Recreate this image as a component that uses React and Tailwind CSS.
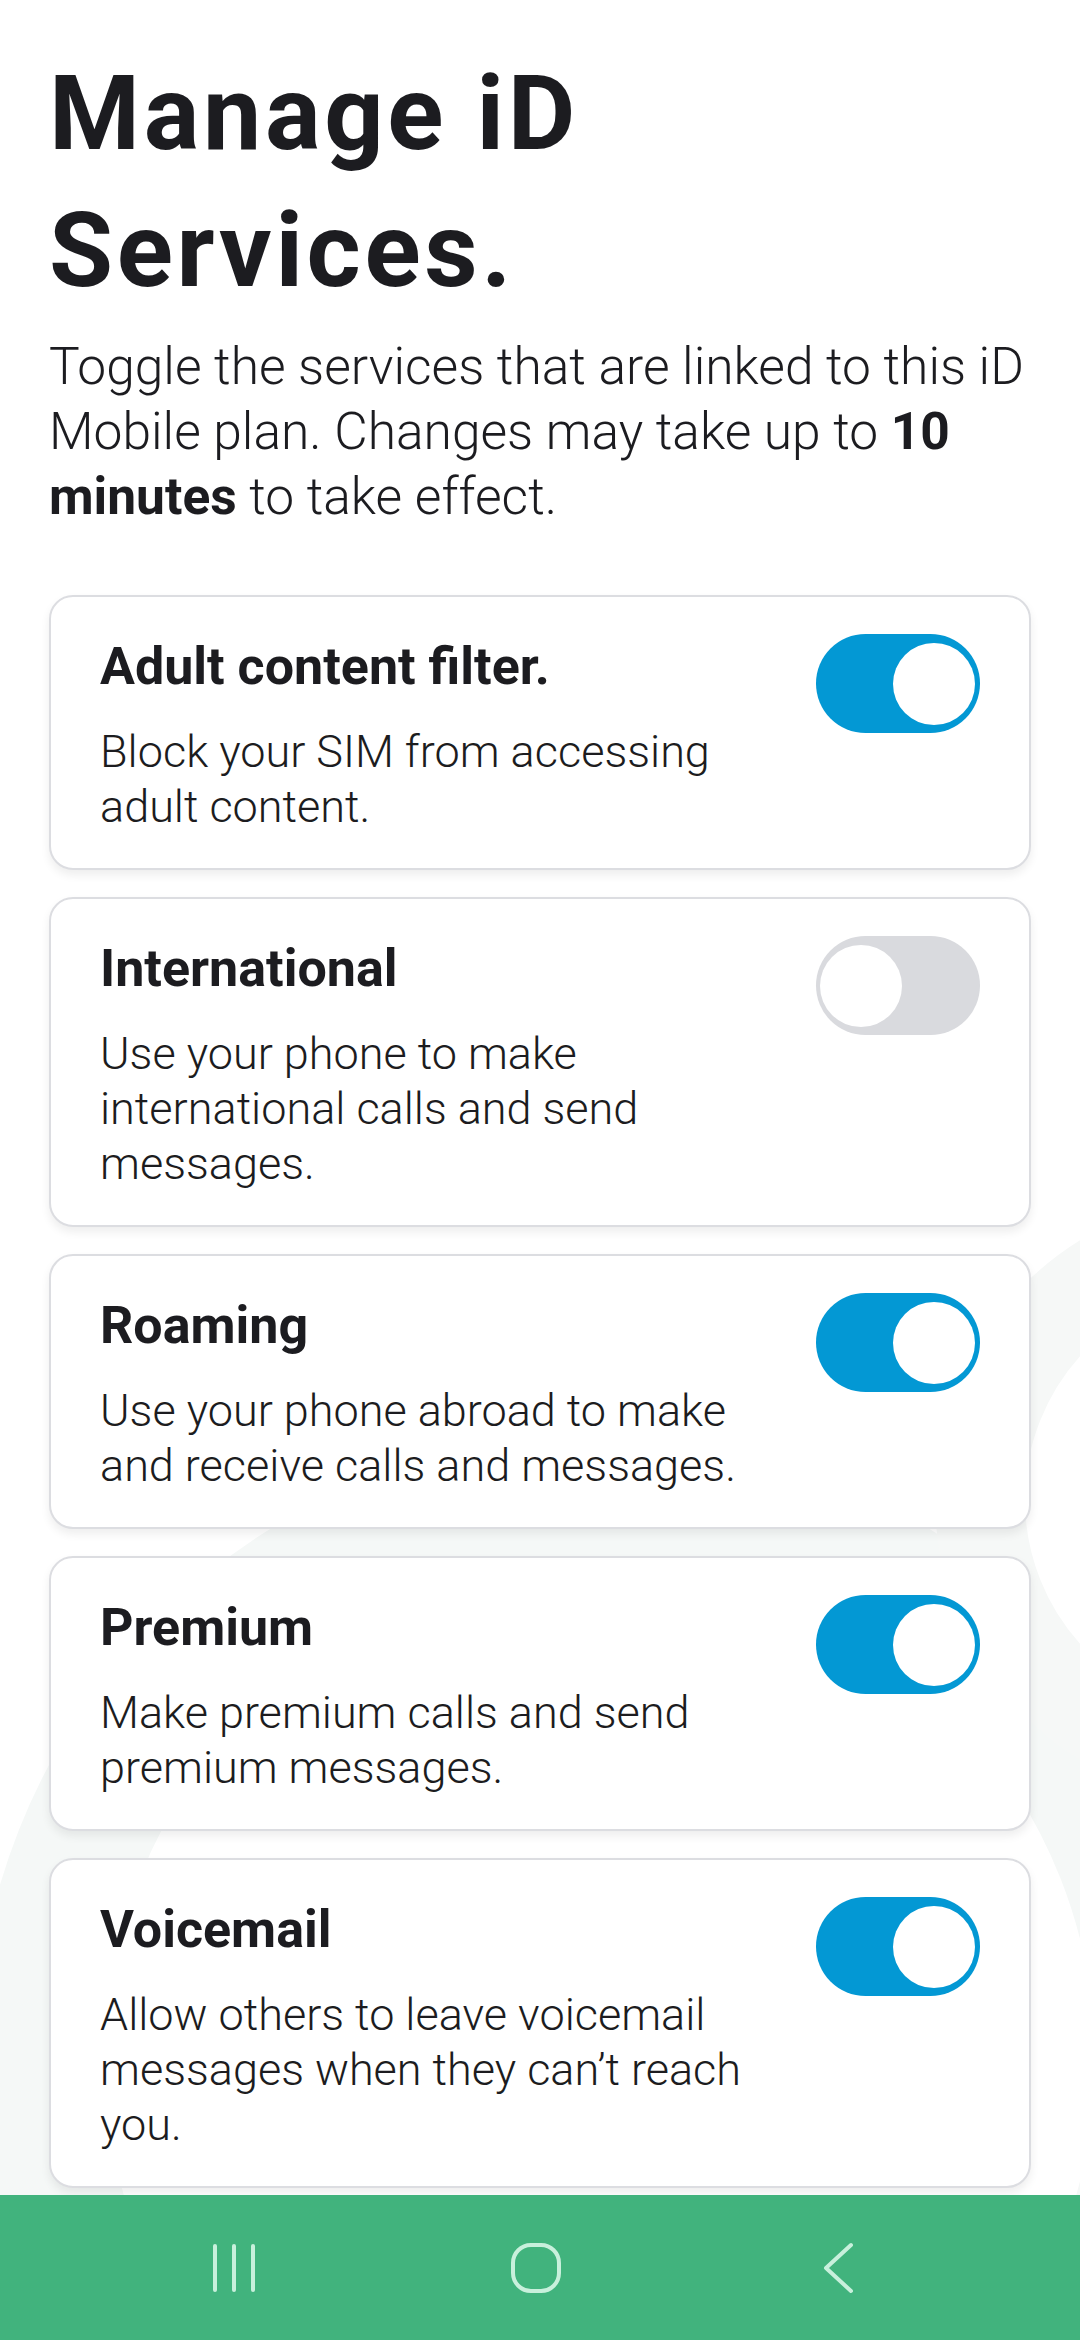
const services = [
  {
    title: "Adult content filter.",
    text: "Block your SIM from accessing adult content.",
    on: true,
  },
  {
    title: "International",
    text: "Use your phone to make international calls and send messages.",
    on: false,
  },
  {
    title: "Roaming",
    text: "Use your phone abroad to make and receive calls and messages.",
    on: true,
  },
  {
    title: "Premium",
    text: "Make premium calls and send premium messages.",
    on: true,
  },
  {
    title: "Voicemail",
    text: "Allow others to leave voicemail messages when they can\u2019t reach you.",
    on: true,
  },
];

function Toggle({ on }) {
  return (
    <div
      className={
        on
          ? "relative -mt-[3px] flex h-[99px] w-[164px] shrink-0 items-center justify-end rounded-full bg-[#0398d4] px-[5px]"
          : "relative -mt-[3px] flex h-[99px] w-[164px] shrink-0 items-center justify-start rounded-full bg-[#d9dade] px-[4px]"
      }
    >
      <span className="block h-[82px] w-[82px] rounded-full bg-white" />
    </div>
  );
}

function ServiceCard({ service }) {
  return (
    <div className="flex items-start gap-[36px] rounded-[24px] border-2 border-[#dcdde1] bg-white pb-[34px] pl-[49px] pr-[49px] pt-[40px] shadow-[0_5px_10px_rgba(0,0,0,0.07)]">
      <div className="flex-1">
        <p className="text-[52px] font-bold leading-[60px] text-[#1c1c20]">
          {service.title}
        </p>
        <p className="mt-[27px] text-[45px] font-light leading-[55px] text-[#1c1c20]">
          {service.text}
        </p>
      </div>
      <Toggle on={service.on} />
    </div>
  );
}

function NavBar() {
  return (
    <nav className="relative flex h-[145px] shrink-0 items-center justify-center gap-[202px] bg-[#41b37d] pr-[8px]">
      <div className="flex w-[100px] justify-center">
        <svg width="44" height="50" viewBox="0 0 44 50" fill="none">
          <g stroke="#c8f0dc" strokeWidth="4" strokeLinecap="round">
            <path d="M3 3v44" />
            <path d="M22 3v44" />
            <path d="M41 3v44" />
          </g>
        </svg>
      </div>
      <div className="flex w-[100px] justify-center">
        <svg width="52" height="52" viewBox="0 0 52 52" fill="none">
          <rect x="3" y="3" width="46" height="46" rx="18" stroke="#c8f0dc" strokeWidth="4" />
        </svg>
      </div>
      <div className="flex w-[100px] justify-center">
        <svg width="36" height="52" viewBox="0 0 36 52" fill="none">
          <path d="M31 3L6 26l25 23" stroke="#c8f0dc" strokeWidth="4" strokeLinecap="round" strokeLinejoin="round" />
        </svg>
      </div>
    </nav>
  );
}

export default function App() {
  return (
    <div
      className="relative flex h-[2340px] w-[1080px] flex-col overflow-hidden bg-white"
      style={{ fontFamily: "Roboto, 'Liberation Sans', sans-serif" }}
    >
      <svg
        className="pointer-events-none absolute inset-0"
        width="1080"
        height="2340"
        viewBox="0 0 1080 2340"
        fill="none"
      >
        <circle cx="600" cy="2060" r="560" stroke="#f5f8f7" strokeWidth="130" />
        <circle cx="1240" cy="1500" r="260" stroke="#f6f8f7" strokeWidth="90" />
      </svg>

      <main className="relative flex-1 px-[49px] pt-[45px]">
        <h1 className="text-[104px] font-bold leading-[137px] tracking-[0.035em] text-[#1c1c20]">
          Manage iD
          <br />
          Services.
        </h1>
        <p className="mt-[15px] text-[51.5px] font-light leading-[65px] text-[#1c1c20]">
          Toggle the services that are linked to this iD Mobile plan. Changes may take up to{" "}
          <span className="font-bold">10 minutes</span> to take effect.
        </p>

        <div className="mt-[66px] flex flex-col gap-[27px]">
          {services.map((s) => (
            <ServiceCard key={s.title} service={s} />
          ))}
        </div>
      </main>

      <NavBar />
    </div>
  );
}
